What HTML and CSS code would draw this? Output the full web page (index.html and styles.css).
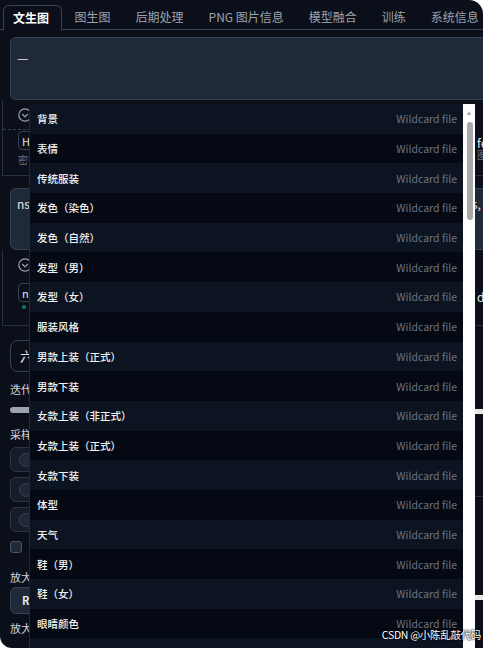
FILE: index.html
```html
<!DOCTYPE html>
<html lang="zh-CN">
<head>
    <meta charset="UTF-8">
    <meta name="viewport" content="width=device-width, initial-scale=1.0">
    <title>文生图</title>
    <link rel="stylesheet" href="styles.css">
</head>
<body>
<div class="app">
    <div class="tabs">
        <div class="tab active">文生图</div>
        <div class="tab">图生图</div>
        <div class="tab">后期处理</div>
        <div class="tab">PNG 图片信息</div>
        <div class="tab">模型融合</div>
        <div class="tab">训练</div>
        <div class="tab">系统信息</div>
    </div>

    <div class="panel">
        <div class="prompt">—</div>

        <div class="extra">
            <div class="extra-left">
                <svg class="toggle" width="14" height="14" viewBox="0 0 14 14"><circle cx="7" cy="7" r="6.2" fill="none" stroke="#9ca3af" stroke-width="1.2"/><path d="M4.2 6 L7 8.8 L9.8 6" fill="none" stroke="#9ca3af" stroke-width="1.2"/></svg>
                <div class="dashed"></div>
                <div class="token">Hires</div>
                <div class="hint">密钥</div>
            </div>
            <div class="extra-right">
                <div class="r-text">fe</div>
                <div class="r-hint">图</div>
            </div>
        </div>

        <div class="prompt neg">nsfw, lowres, bad anatomy, worst quality, low quality, normal quality, jpeg artifacts, signature, watermark, username, blurry, artist_name, bad_hands</div>

        <div class="extra second">
            <div class="extra-left">
                <svg class="toggle" width="14" height="14" viewBox="0 0 14 14"><circle cx="7" cy="7" r="6.2" fill="none" stroke="#9ca3af" stroke-width="1.2"/><path d="M4.2 6 L7 8.8 L9.8 6" fill="none" stroke="#9ca3af" stroke-width="1.2"/></svg>
                <div class="token small">n</div>
                <div class="dot"></div>
            </div>
            <div class="extra-right">
                <div class="r-text d">d</div>
            </div>
        </div>

        <div class="settings">
            <div class="set-left">
                <div class="select">六</div>
                <div class="label">迭代步数</div>
                <div class="slider"></div>
                <div class="label">采样方法</div>
                <div class="radios">
                    <div class="radio"><span class="ring"></span></div>
                    <div class="radio"><span class="ring"></span></div>
                    <div class="radio"><span class="ring"></span></div>
                </div>
                <div class="check"></div>
                <div class="label up">放大算法</div>
                <div class="select short">R</div>
                <div class="label low">放大倍数</div>
            </div>
            <div class="set-right">
                <div class="r-bar"></div>
                <div class="r-box"></div>
                <div class="r-text a">a</div>
                <div class="r-bar low"></div>
            </div>
        </div>
    </div>

    <div class="dropdown">
        <ul class="dd-list">
            <li><span>背景</span><span class="kind">Wildcard file</span></li>
            <li><span>表情</span><span class="kind">Wildcard file</span></li>
            <li><span>传统服装</span><span class="kind">Wildcard file</span></li>
            <li><span>发色（染色）</span><span class="kind">Wildcard file</span></li>
            <li><span>发色（自然）</span><span class="kind">Wildcard file</span></li>
            <li><span>发型（男）</span><span class="kind">Wildcard file</span></li>
            <li><span>发型（女）</span><span class="kind">Wildcard file</span></li>
            <li><span>服装风格</span><span class="kind">Wildcard file</span></li>
            <li><span>男款上装（正式）</span><span class="kind">Wildcard file</span></li>
            <li><span>男款下装</span><span class="kind">Wildcard file</span></li>
            <li><span>女款上装（非正式）</span><span class="kind">Wildcard file</span></li>
            <li><span>女款上装（正式）</span><span class="kind">Wildcard file</span></li>
            <li><span>女款下装</span><span class="kind">Wildcard file</span></li>
            <li><span>体型</span><span class="kind">Wildcard file</span></li>
            <li><span>天气</span><span class="kind">Wildcard file</span></li>
            <li><span>鞋（男）</span><span class="kind">Wildcard file</span></li>
            <li><span>鞋（女）</span><span class="kind">Wildcard file</span></li>
            <li><span>眼睛颜色</span><span class="kind">Wildcard file</span></li>
            <li><span>饰品</span><span class="kind">Wildcard file</span></li>
        </ul>
        <div class="dd-scroll">
            <div class="arrow"></div>
            <div class="thumb"></div>
        </div>
    </div>

    <div class="watermark">CSDN @小陈乱敲代码</div>
</div>
</body>
</html>
```

FILE: styles.css
```css
body {
    margin: 0;
    background-color: #fff;
    font-family: "Noto Sans CJK SC", "Noto Sans", sans-serif;
}

.app {
    position: relative;
    width: 483px;
    height: 648px;
    background-color: #0b0f19;
    border-radius: 0 14px 0 12px;
    overflow: hidden;
    color: #e5e7eb;
}

/* tabs */
.tabs {
    display: flex;
    padding: 5px 0 0 3px;
    border-bottom: 1px solid #374151;
    white-space: nowrap;
}

.tab {
    height: 24px;
    line-height: 24px;
    padding: 0 12.5px;
    font-size: 12px;
    color: #9ca3af;
}

.tab.active {
    padding: 0 12px 0 9px;
    margin-bottom: -1px;
    height: 24px;
    color: #fff;
    font-weight: 700;
    border: 1px solid #374151;
    border-bottom: none;
    border-radius: 6px 6px 0 0;
    background-color: #0b0f19;
}

/* panel */
.panel {
    padding-left: 10px;
    width: 500px;
}

.prompt {
    margin-top: 7px;
    height: 63px;
    box-sizing: border-box;
    background-color: #1f2937;
    border: 1px solid #374151;
    border-radius: 6px;
    padding: 11px 6px 0;
    font-size: 13px;
    line-height: 18px;
    color: #e5e7eb;
    overflow: hidden;
}

.prompt.neg {
    margin-top: 12px;
    height: 62px;
    padding-top: 6px;
    font-size: 12px;
    white-space: nowrap;
}

.extra {
    display: flex;
    margin-left: -8px;
    height: 76px;
    border-left: 1px solid #283040;
    border-bottom: 1px solid #283040;
    box-sizing: border-box;
}

.extra-left {
    width: 472px;
    padding-left: 15px;
    box-sizing: border-box;
}

.toggle {
    display: block;
    margin-top: 8px;
}

.dashed {
    margin: 7px 0 0 -15px;
    border-top: 1px dashed #374151;
}

.token {
    margin-top: 1px;
    width: 120px;
    height: 19px;
    line-height: 18px;
    box-sizing: border-box;
    border: 1px solid #374151;
    border-radius: 4px;
    padding-left: 3px;
    font-size: 11px;
    color: #e5e7eb;
}

.token.small {
    margin-top: 11px;
}

.hint {
    margin-top: 2px;
    font-size: 10px;
    color: #6b7280;
}

.dot {
    margin: 3px 0 0 4px;
    width: 4px;
    height: 4px;
    border-radius: 50%;
    background-color: #0f766e;
}

.extra-right {
    padding-left: 2px;
    font-size: 12px;
}

.r-text {
    margin-top: 34px;
    color: #e5e7eb;
}

.r-text.d {
    margin-top: 38px;
}

.r-hint {
    font-size: 10px;
    color: #6b7280;
    margin-top: -4px;
}

/* settings */
.settings {
    display: flex;
}

.set-left {
    width: 470px;
}

.select {
    margin-top: 14px;
    height: 32px;
    line-height: 30px;
    box-sizing: border-box;
    border: 1px solid #374151;
    border-radius: 8px;
    padding-left: 9px;
    font-size: 13px;
    color: #e5e7eb;
}

.select.short {
    margin-top: 3px;
    height: 27px;
    line-height: 25px;
    padding-left: 11px;
    font-size: 11px;
    font-weight: 700;
    background-color: #1f2937;
    border-radius: 6px;
}

.label {
    margin-top: 10px;
    font-size: 11px;
    line-height: 14px;
    color: #d1d5db;
}

.label.up {
    margin-top: 17px;
}

.label.low {
    margin-top: 7px;
}

.slider {
    margin-top: 11px;
    height: 6px;
    border-radius: 3px;
    background-color: #9ca3af;
}

.slider + .label {
    margin-top: 14px;
}

.radios {
    display: flex;
    flex-direction: column;
    gap: 5px;
    margin-top: 6px;
}

.radio {
    height: 25px;
    box-sizing: border-box;
    border: 1px solid #2b3544;
    border-radius: 6px;
    background-color: #161d2a;
    display: flex;
    align-items: center;
    padding-left: 8px;
}

.ring {
    width: 12px;
    height: 12px;
    border-radius: 50%;
    border: 1px solid #374151;
    background-color: #1f2937;
}

.check {
    margin-top: 9px;
    width: 12px;
    height: 12px;
    box-sizing: border-box;
    border: 1px solid #4b5563;
    border-radius: 3px;
    background-color: #1f2937;
}

.set-right {
    padding-left: 3px;
    width: 60px;
}

.r-bar {
    margin-top: 83px;
    height: 5px;
    background-color: #e5e7eb;
}

.r-bar.low {
    margin-top: 98px;
}

.r-box {
    margin: 33px 0 0 -20px;
    width: 26px;
    height: 28px;
    border: 1px solid #2b3544;
    border-radius: 6px;
    background-color: #161d2a;
}

.r-text.a {
    margin-top: 0;
    font-size: 12px;
    border-bottom: 1px solid #283040;
    padding-bottom: 2px;
}

/* dropdown list */
.dropdown {
    position: absolute;
    left: 29px;
    top: 104px;
    width: 446px;
    height: 560px;
    display: flex;
    border-left: 1px solid #1f2937;
    border-radius: 6px 0 0 0;
    overflow: hidden;
    box-sizing: border-box;
}

.dd-list {
    flex: 1;
    list-style: none;
    margin: 0;
    padding: 0;
}

.dd-list li {
    height: 29.7px;
    display: flex;
    align-items: center;
    justify-content: space-between;
    padding: 0 6px 0 7px;
    font-size: 10.5px;
    font-weight: 500;
    color: #f3f4f6;
    background-color: #0c1422;
}

.dd-list li:nth-child(even) {
    background-color: #050913;
}

.dd-list .kind {
    color: #6b7280;
    font-weight: 400;
}

.dd-scroll {
    position: relative;
    width: 12px;
    background-color: #fff;
}

.arrow {
    position: absolute;
    left: 4px;
    top: 7px;
    border-left: 2.5px solid transparent;
    border-right: 2.5px solid transparent;
    border-bottom: 4px solid #a3a3a3;
}

.thumb {
    position: absolute;
    left: 4px;
    top: 18px;
    width: 6px;
    height: 98px;
    border-radius: 3px;
    background-color: #a8a8a8;
}

.watermark {
    position: absolute;
    right: 2px;
    bottom: 6px;
    font-size: 10.5px;
    color: #fff;
    text-shadow: 0 0 2px #000, 0 0 2px #000;
    letter-spacing: -0.3px;
}
```
